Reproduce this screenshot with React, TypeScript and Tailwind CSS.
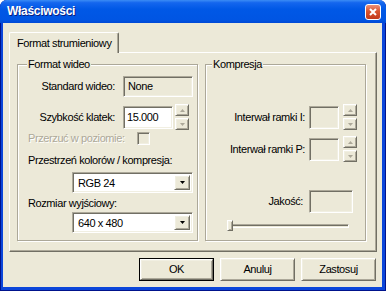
import React from 'react';

const raised =
  'border border-t-white border-l-white border-r-[#716F64] border-b-[#716F64] shadow-[inset_1px_1px_0_#F1EFE2,inset_-1px_-1px_0_#ACA899]';
const sunken =
  'border border-t-[#ACA899] border-l-[#ACA899] border-r-white border-b-white shadow-[inset_1px_1px_0_#716F64,inset_-1px_-1px_0_#F1EFE2]';

const Arrow = ({ up, color }: { up?: boolean; color: string }) => (
  <svg width="5" height="3" viewBox="0 0 5 3">
    <path d={up ? 'M2.5 0L5 3H0z' : 'M0 0H5L2.5 3z'} fill={color} />
  </svg>
);

const Spin = () => (
  <div className="flex flex-col gap-[2px] w-[14px]">
    <div className={`h-[12px] bg-[#ECE9D8] flex items-center justify-center ${raised}`}>
      <Arrow up color="#ACA899" />
    </div>
    <div className={`h-[12px] bg-[#ECE9D8] flex items-center justify-center ${raised}`}>
      <Arrow color="#ACA899" />
    </div>
  </div>
);

const Combo = ({ value }: { value: string }) => (
  <div className={`ml-[54px] w-[121px] h-[21px] bg-white flex items-stretch p-[2px] ${sunken}`}>
    <span className="flex-1 pl-[3px] leading-[17px]">{value}</span>
    <div className={`w-[16px] bg-[#ECE9D8] flex items-center justify-center ${raised}`}>
      <Arrow color="#000" />
    </div>
  </div>
);

const Button = ({ label, primary }: { label: string; primary?: boolean }) =>
  primary ? (
    <div className="w-[75px] h-[23px] border border-black">
      <div className={`w-full h-full bg-[#ECE9D8] flex items-center justify-center ${raised}`}>{label}</div>
    </div>
  ) : (
    <div className={`w-[75px] h-[23px] bg-[#ECE9D8] flex items-center justify-center ${raised}`}>{label}</div>
  );

export default function App() {
  return (
    <div className="w-[386px] h-[291px] rounded-t-[7px] bg-[#0B46DA] shadow-[inset_1px_0_0_#00138C,inset_-1px_-1px_0_#00138C] flex flex-col font-['Liberation_Sans',Arial,sans-serif] text-[11px] tracking-[-0.4px] leading-[13px] text-black overflow-hidden">
      {/* title bar */}
      <div className="h-[23px] flex items-center justify-between pl-[7px] pr-[5px] bg-[linear-gradient(to_bottom,#3B8CF5_0%,#1466EE_12%,#0058E6_40%,#0055E3_85%,#0049D6_100%)]">
        <span className="text-white font-bold text-[12px] tracking-[-0.3px] [text-shadow:1px_1px_0_#0A1E80]">Właściwości</span>
        <div className="w-[16px] h-[16px] rounded-[3px] border border-white bg-[linear-gradient(to_bottom,#E9907A,#D9542F_45%,#C2391A)] flex items-center justify-center">
          <svg width="8" height="8" viewBox="0 0 8 8">
            <path d="M1 1L7 7M7 1L1 7" stroke="#fff" strokeWidth="2" />
          </svg>
        </div>
      </div>

      {/* body */}
      <div className="ml-[3px] mr-[4px] mb-[4px] flex-1 bg-[#ECE9D8] flex flex-col pt-[9px] pl-[6px] pr-[5px]">
        <div className="flex">
          <div className="relative z-10 -mb-[1px] h-[21px] w-[110px] pl-[7px] flex items-center whitespace-nowrap bg-[#ECE9D8] border-l border-t border-r border-l-white border-t-white border-r-[#716F64] rounded-t-[2px] shadow-[inset_-1px_0_0_#ACA899]">
            Format strumieniowy
          </div>
        </div>

        <div className="h-[200px] border border-t-white border-l-white border-r-[#716F64] border-b-[#716F64] shadow-[inset_-1px_-1px_0_#ACA899] flex gap-[7px] pl-[7px] pt-[5px]">
          {/* Format wideo */}
          <fieldset className="w-[181px] h-[183px] border border-[#ACA899] shadow-[inset_1px_1px_0_#fff,1px_1px_0_#fff] flex flex-col">
            <legend className="ml-[9px] px-[1px] leading-[13px] bg-[#ECE9D8]">Format wideo</legend>
            <div className="mt-[5px] h-[21px] flex items-center">
              <span className="w-[97px] text-right">Standard wideo:</span>
              <div className={`ml-[8px] w-[70px] h-[21px] bg-[#ECE9D8] pl-[4px] flex items-center ${sunken}`}>None</div>
            </div>
            <div className="mt-[7px] h-[26px] flex items-center">
              <span className="w-[97px] text-right">Szybkość klatek:</span>
              <div className={`ml-[8px] w-[50px] h-[23px] bg-white pl-[3px] flex items-center ${sunken}`}>15.000</div>
              <div className="ml-[2px]">
                <Spin />
              </div>
            </div>
            <div className="mt-[2px] h-[13px] flex items-center pl-[10px]">
              <span className="w-[109px] text-[#ACA899] [text-shadow:1px_1px_0_#fff]">Przerzuć w poziomie:</span>
              <div className={`w-[13px] h-[13px] bg-[#ECE9D8] ${sunken}`} />
            </div>
            <div className="mt-[9px] h-[13px] pl-[10px]">Przestrzeń kolorów / kompresja:</div>
            <div className="mt-[5px]">
              <Combo value="RGB 24" />
            </div>
            <div className="mt-[4px] h-[13px] pl-[10px]">Rozmiar wyjściowy:</div>
            <div className="mt-[2px]">
              <Combo value="640 x 480" />
            </div>
          </fieldset>

          {/* Kompresja */}
          <fieldset className="w-[161px] h-[183px] border border-[#ACA899] shadow-[inset_1px_1px_0_#fff,1px_1px_0_#fff] flex flex-col">
            <legend className="ml-[6px] px-[1px] leading-[13px] bg-[#ECE9D8]">Kompresja</legend>
            <div className="mt-[33px] h-[26px] flex items-center">
              <span className="w-[99px] text-right">Interwał ramki I:</span>
              <div className={`ml-[4px] w-[30px] h-[23px] bg-[#ECE9D8] ${sunken}`} />
              <div className="ml-[4px]">
                <Spin />
              </div>
            </div>
            <div className="mt-[6px] h-[26px] flex items-center">
              <span className="w-[99px] text-right">Interwał ramki P:</span>
              <div className={`ml-[4px] w-[30px] h-[23px] bg-[#ECE9D8] ${sunken}`} />
              <div className="ml-[4px]">
                <Spin />
              </div>
            </div>
            <div className="mt-[28px] h-[23px] flex items-center">
              <span className="w-[97px] text-right">Jakość:</span>
              <div className={`ml-[6px] w-[44px] h-[23px] bg-[#ECE9D8] ${sunken}`} />
            </div>
            <div className="mt-[7px] h-[11px] relative flex items-center pl-[23px]">
              <div className="w-[120px] h-[4px] border border-t-[#ACA899] border-l-[#ACA899] border-r-white border-b-white shadow-[inset_1px_1px_0_#716F64]" />
              <div className={`absolute left-[21px] top-0 w-[6px] h-[11px] bg-[#ECE9D8] ${raised}`} />
            </div>
          </fieldset>
        </div>

        <div className="mt-[6px] mr-[1px] flex justify-end gap-[6px]">
          <Button label="OK" primary />
          <Button label="Anuluj" />
          <Button label="Zastosuj" />
        </div>
      </div>
    </div>
  );
}
